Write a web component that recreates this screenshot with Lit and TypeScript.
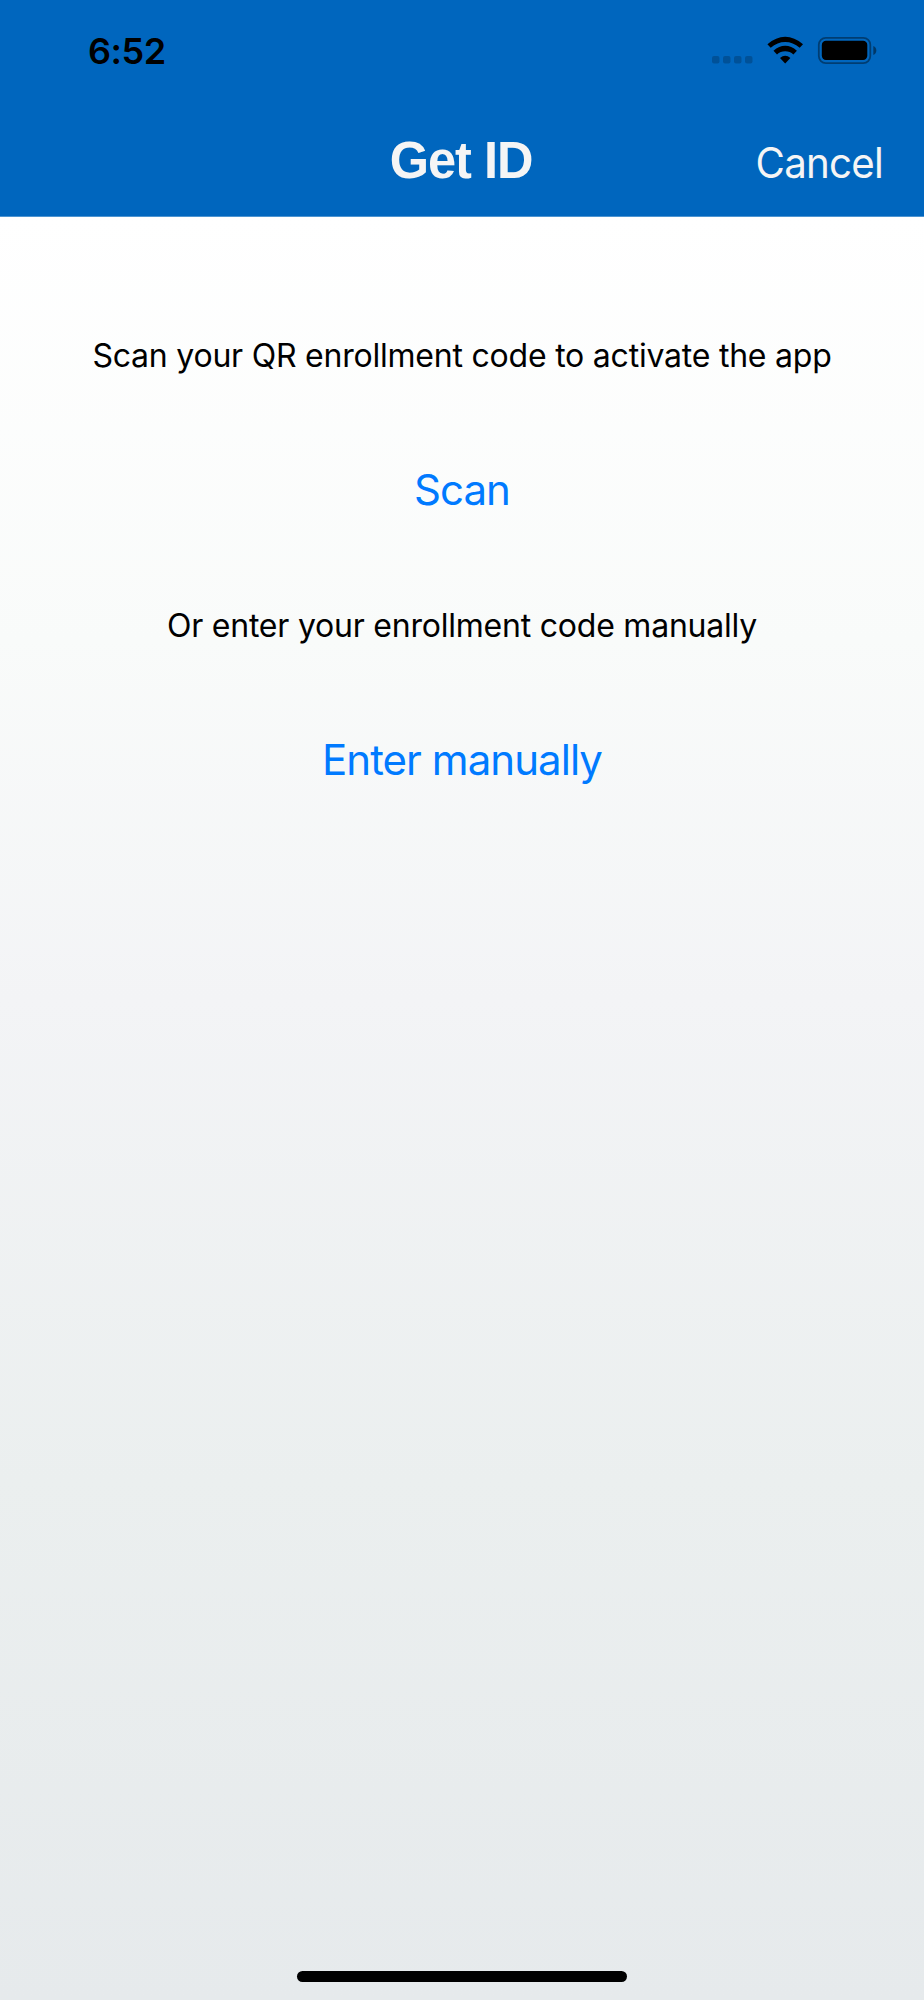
import { LitElement, html, css } from "lit";
import { customElement } from "lit/decorators.js";

@customElement("app-root")
export class AppRoot extends LitElement {
  static styles = css`
    :host { display: flex; flex-direction: column; width: 924px; height: 2000px; overflow: hidden; font-family: Inter, sans-serif; color: #000; background: linear-gradient(#fff 217px, #f9fbfa 640px, #f3f4f6 1000px, #ebefef 1480px, #e6eaec 2000px); }
    * { box-sizing: border-box; }
    header { height: 217px; background: #0066be; border-bottom: 1px solid #4c94d1; }
    .status { height: 100px; display: flex; justify-content: space-between; padding-left: 88px; }
    .time { font-size: 36px; font-weight: 600; line-height: 102px; letter-spacing: -0.5px; white-space: nowrap; }
    .icons { width: 234px; height: 70px; margin-top: 20px; }
    .nav { height: 116px; display: grid; grid-template-columns: 1fr auto 1fr; color: #f5f5f5; white-space: nowrap; }
    .title { grid-column: 2; padding-right: 2px; font: 700 51px/121px "Liberation Sans", sans-serif; letter-spacing: -1px; transform: scaleX(.99); }
    .cancel { justify-self: end; margin-right: 41px; font-size: 42px; line-height: 125px; letter-spacing: -.8px; transform: scaleX(.958); transform-origin: 100% 50%; }
    main { flex: 1; display: flex; flex-direction: column; align-items: center; padding-top: 70px; }
    .row { height: 135px; line-height: 137px; white-space: nowrap; font-size: 32px; letter-spacing: -.22px; }
    .link { color: #007aff; font-size: 42px; line-height: 135px; letter-spacing: -.95px; }
    .foot { height: 29px; display: flex; justify-content: center; }
    .home { width: 330px; height: 11px; border-radius: 6px; background: #000; }
  `;
  render() {
    return html`
      <header>
        <div class="status"><span class="time">6:52</span>
          <svg class="icons" viewBox="0 0 234 70">
            <g fill="#000" fill-opacity=".2"><rect x="22" y="36" width="7.5" height="7.5" rx="2"/><rect x="33" y="36" width="7.5" height="7.5" rx="2"/><rect x="44" y="36" width="7.5" height="7.5" rx="2"/><rect x="55" y="36" width="7.5" height="7.5" rx="2"/></g>
            <path d="M77.4 24.3Q86 16.8 95.2 16.8T113 24.3L109.7 27.8Q103 22 95.2 22T80.7 27.8Z"/>
            <path d="M83.5 30.8Q89 25.8 95.2 25.8T106.9 30.8L103.4 34.4Q100 31.3 95.2 31.3T87 34.4Z"/>
            <path d="M90 38Q95.2 33.4 100.4 38L95.2 43.5Z"/>
            <rect x="128.8" y="17.8" width="51.5" height="25.3" rx="7" fill="none" stroke="#000" stroke-opacity=".4" stroke-width="1.8"/>
            <rect x="131.8" y="20.8" width="45.5" height="19.2" rx="4.2"/>
            <path d="M183.3 26Q186.3 27.4 186.3 30.5T183.3 35Z" fill-opacity=".45"/>
          </svg>
        </div>
        <div class="nav"><span class="title">Get ID</span><span class="cancel">Cancel</span></div>
      </header>
      <main>
        <div class="row"><span>Scan your QR enrollment code to activate the app</span></div>
        <div class="row link"><span>Scan</span></div>
        <div class="row"><span>Or enter your enrollment code manually</span></div>
        <div class="row link"><span>Enter manually</span></div>
      </main>
      <div class="foot"><div class="home"></div></div>`;
  }
}
